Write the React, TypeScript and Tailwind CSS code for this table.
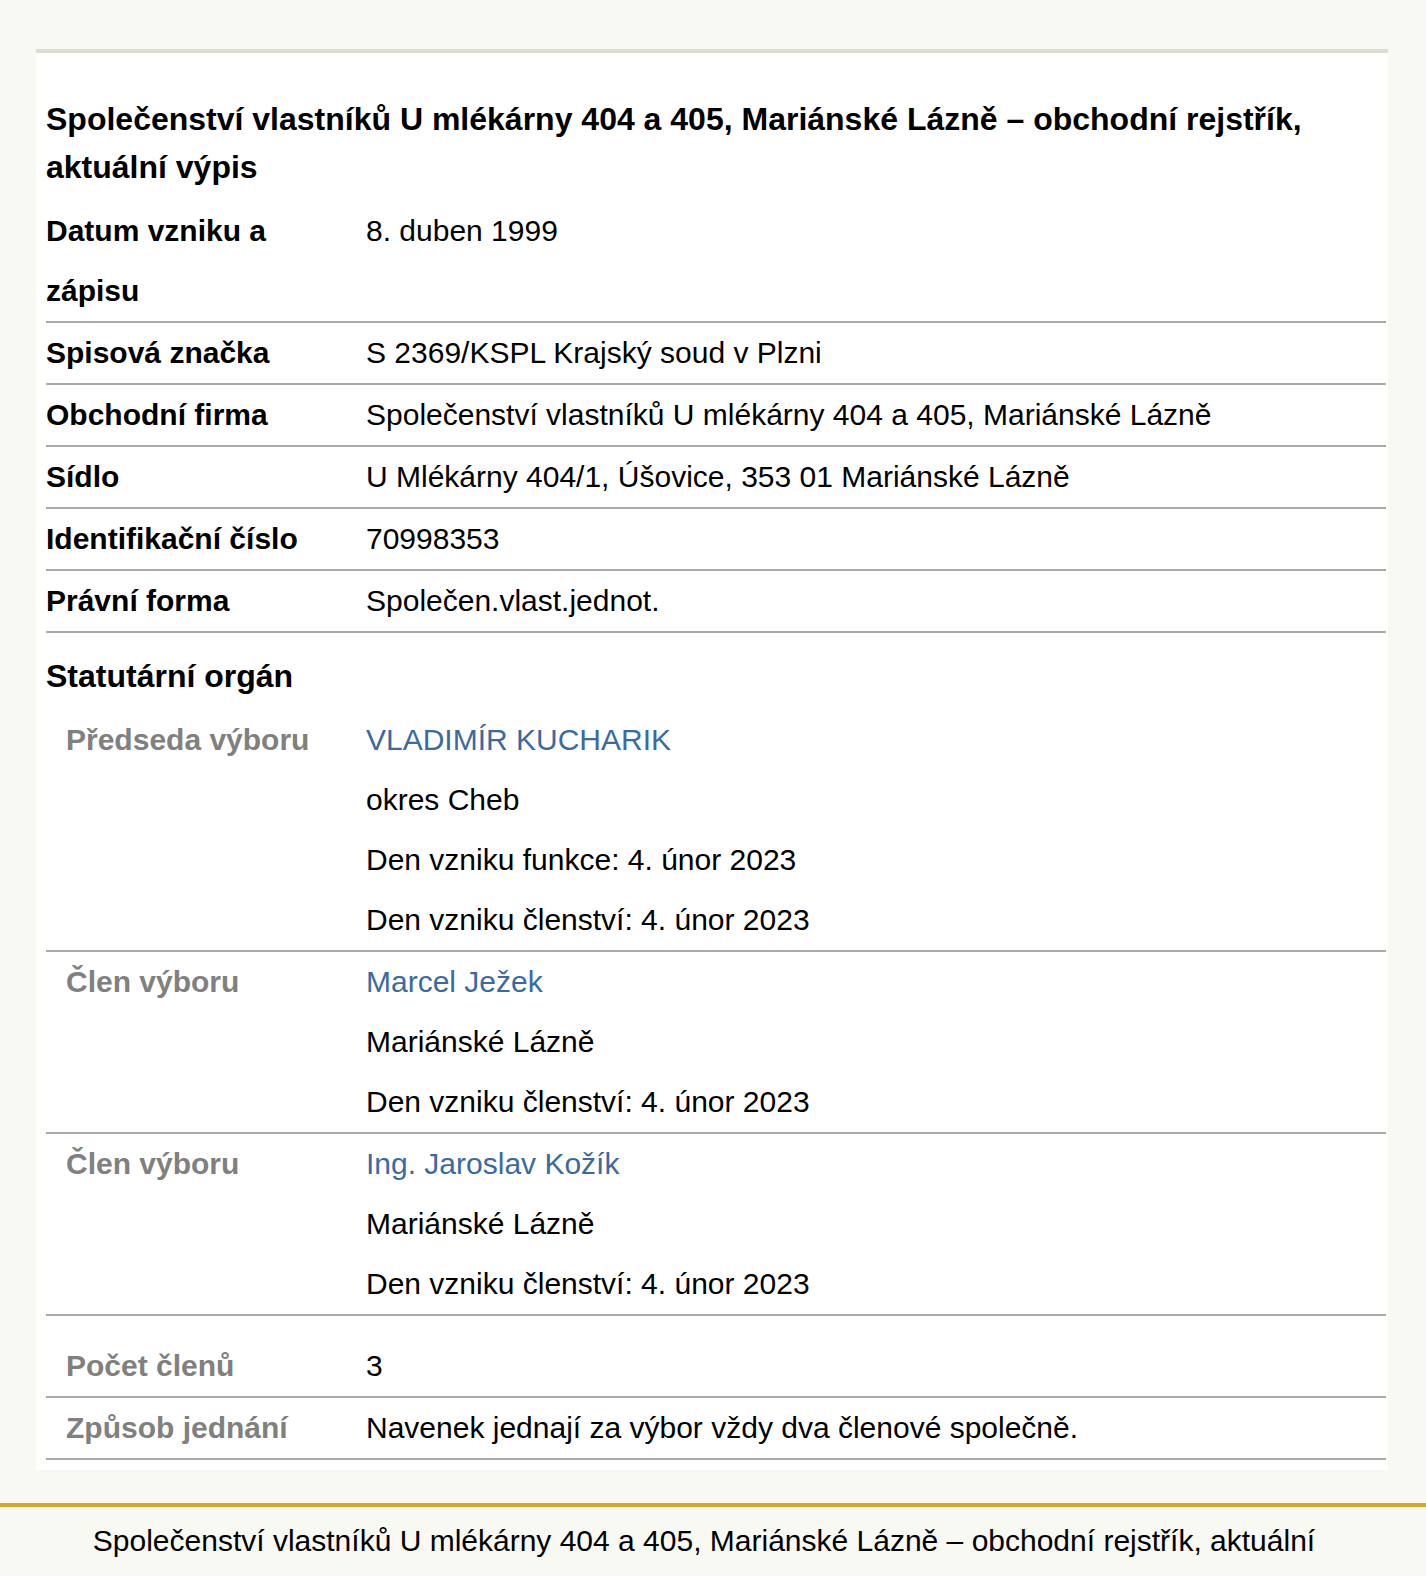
import React from "react";

const font = { fontFamily: '"Liberation Sans", Arial, sans-serif' };

function Row({ label, children, sub = false }: { label: string; children: React.ReactNode; sub?: boolean }) {
  return (
    <div className="flex border-b-2 border-[#aaaaaa] leading-[60px]">
      <div
        className={
          sub
            ? "w-[320px] shrink-0 pl-[20px] pr-[20px] font-bold text-[#808080]"
            : "w-[320px] shrink-0 pr-[20px] font-bold text-black"
        }
      >
        {label}
      </div>
      <div className="flex-1 text-black">{children}</div>
    </div>
  );
}

function Link({ children }: { children: React.ReactNode }) {
  return <div className="text-[#3b6aa3]">{children}</div>;
}

export default function App() {
  return (
    <div className="min-h-[1576px] bg-[#f9f9f4] pt-[49px] text-[30px]" style={font}>
      <div className="mx-[36px] w-[1352px] border-t-4 border-[#dcdcd1] bg-white pb-[10px] pl-[10px] pr-[2px]">
        <h1 className="pt-[42px] pb-[10px] text-[32px] font-bold leading-[48px] text-black">
          Společenství vlastníků U mlékárny 404 a 405, Mariánské Lázně – obchodní rejstřík, aktuální výpis
        </h1>
        <Row label="Datum vzniku a zápisu">
          <div>8. duben 1999</div>
        </Row>
        <Row label="Spisová značka">S 2369/KSPL Krajský soud v Plzni</Row>
        <Row label="Obchodní firma">Společenství vlastníků U mlékárny 404 a 405, Mariánské Lázně</Row>
        <Row label="Sídlo">U Mlékárny 404/1, Úšovice, 353 01 Mariánské Lázně</Row>
        <Row label="Identifikační číslo">70998353</Row>
        <Row label="Právní forma">Společen.vlast.jednot.</Row>
        <h2 className="pt-[13px] pb-[4px] text-[32px] font-bold leading-[60px] text-black">Statutární orgán</h2>
        <Row label="Předseda výboru" sub>
          <Link>VLADIMÍR KUCHARIK</Link>
          <div>okres Cheb</div>
          <div>Den vzniku funkce: 4. únor 2023</div>
          <div>Den vzniku členství: 4. únor 2023</div>
        </Row>
        <Row label="Člen výboru" sub>
          <Link>Marcel Ježek</Link>
          <div>Mariánské Lázně</div>
          <div>Den vzniku členství: 4. únor 2023</div>
        </Row>
        <Row label="Člen výboru" sub>
          <Link>Ing. Jaroslav Kožík</Link>
          <div>Mariánské Lázně</div>
          <div>Den vzniku členství: 4. únor 2023</div>
        </Row>
        <div className="pt-[20px]">
          <Row label="Počet členů" sub>3</Row>
        </div>
        <Row label="Způsob jednání" sub>Navenek jednají za výbor vždy dva členové společně.</Row>
      </div>
      <div className="mt-[33px] border-t-4 border-[#d9a526] pl-[82px] pr-[100px] pt-[4px] text-center leading-[60px] text-black">
        Společenství vlastníků U mlékárny 404 a 405, Mariánské Lázně – obchodní rejstřík, aktuální výpis
      </div>
    </div>
  );
}
